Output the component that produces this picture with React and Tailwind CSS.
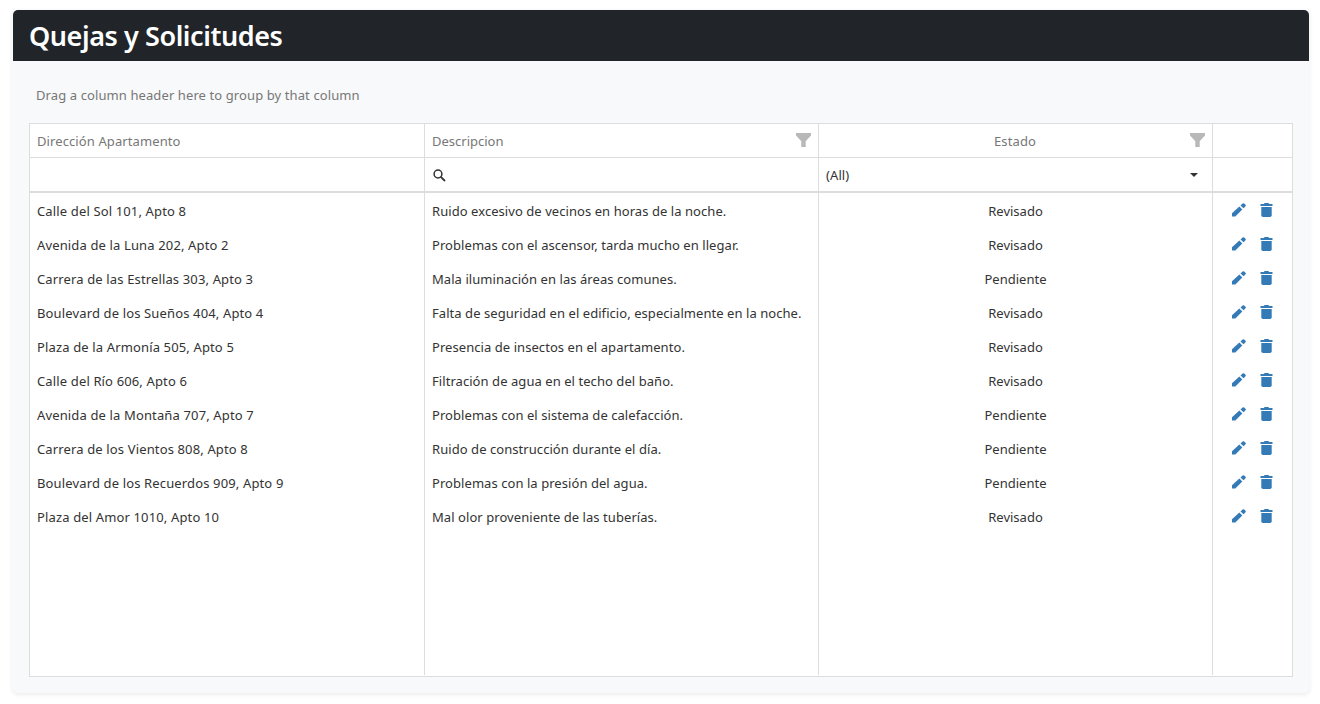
const rows = [
  ["Calle del Sol 101, Apto 8", "Ruido excesivo de vecinos en horas de la noche.", "Revisado"],
  ["Avenida de la Luna 202, Apto 2", "Problemas con el ascensor, tarda mucho en llegar.", "Revisado"],
  ["Carrera de las Estrellas 303, Apto 3", "Mala iluminación en las áreas comunes.", "Pendiente"],
  ["Boulevard de los Sueños 404, Apto 4", "Falta de seguridad en el edificio, especialmente en la noche.", "Revisado"],
  ["Plaza de la Armonía 505, Apto 5", "Presencia de insectos en el apartamento.", "Revisado"],
  ["Calle del Río 606, Apto 6", "Filtración de agua en el techo del baño.", "Revisado"],
  ["Avenida de la Montaña 707, Apto 7", "Problemas con el sistema de calefacción.", "Pendiente"],
  ["Carrera de los Vientos 808, Apto 8", "Ruido de construcción durante el día.", "Pendiente"],
  ["Boulevard de los Recuerdos 909, Apto 9", "Problemas con la presión del agua.", "Pendiente"],
  ["Plaza del Amor 1010, Apto 10", "Mal olor proveniente de las tuberías.", "Revisado"],
];

const columns = "grid grid-cols-[395px_394px_394px_79px]";

function Funnel() {
  return (
    <svg className="-mt-0.5 h-[14px] w-[15px] shrink-0" viewBox="0 0 15 14" fill="#b8b8b8">
      <path d="M0 0h15v2.500L9.700 8.200V14H5.300V8.200L0 2.500z" />
    </svg>
  );
}

function SearchIcon() {
  return (
    <svg className="mt-0.5 size-[13px]" viewBox="0 0 13 13" fill="none" stroke="#333" strokeWidth="1.5">
      <circle cx="5" cy="5" r="3.900" />
      <path d="M7.800 7.800l4.200 4.200" strokeWidth="1.800" />
    </svg>
  );
}

function Pencil() {
  return (
    <svg className="size-[14px]" viewBox="0 0 14 14" fill="#337ab7">
      <path d="M0 13.500v-3.200l7.300-6.700 3 2.900L3.300 13.500z" />
      <path d="M8.500 2.400L10.600.500q.8-.7 1.600 0l1.300 1.200q.7.800 0 1.600L11.600 5.300z" />
    </svg>
  );
}

function Trash() {
  return (
    <svg className="h-[14px] w-[13px]" viewBox="0 0 13 14" fill="#337ab7">
      <path d="M.500 1h3.200l1-1h3.600l1 1h3.200v2H.500z" />
      <path d="M1.300 4h10.400v8.300q0 1.700-1.700 1.700H3q-1.700 0-1.700-1.700z" />
    </svg>
  );
}

export default function App() {
  return (
    <div className="h-[704px] bg-white px-3 pt-[9px] font-['Noto_Sans',sans-serif] text-[13px] tracking-[0.1px] text-[#333]">
      <section className="flex h-[684px] w-[1298px] flex-col rounded-md border border-[#f8f9fa] bg-[#f8f9fa] shadow-[0_2px_4px_rgba(0,0,0,0.075)]">
        <header className="flex h-[51px] shrink-0 items-center rounded-t-[5px] bg-[#212529] px-4">
          <h1 className="text-[27px] leading-none font-semibold tracking-[-0.43px] text-white"><span>Quejas y Solicitudes</span></h1>
        </header>
        <div className="flex h-[62px] shrink-0 items-center px-[23px] pt-2 text-[#777]">
          <span>Drag a column header here to group by that column</span>
        </div>
        <div className="mx-4 flex h-[554px] w-[1264px] flex-col border border-[#ddd] bg-white">
          <div className={`${columns} h-[34px] shrink-0 border-b border-[#ddd] text-[#777]`}>
            <div className="flex items-center border-r border-[#ddd] pt-0.5 pl-[7px]"><span>Dirección Apartamento</span></div>
            <div className="flex items-center justify-between border-r border-[#ddd] pr-[7px] pl-[7px]"><span className="pt-0.5 tracking-normal">Descripcion</span><Funnel /></div>
            <div className="flex items-center border-r border-[#ddd] pr-[7px]"><span className="flex-1 pt-0.5 pl-[21px] text-center">Estado</span><Funnel /></div>
            <div />
          </div>
          <div className={`${columns} h-[35px] shrink-0 border-b-2 border-[#ddd]`}>
            <div className="border-r border-[#ddd]" />
            <div className="flex items-center border-r border-[#ddd] pl-2"><SearchIcon /></div>
            <div className="flex items-center justify-between border-r border-[#ddd] pr-[14px] pl-[7px]">
              <span className="pt-0.5">(All)</span>
              <svg className="h-1 w-[8px]" viewBox="0 0 8 4" fill="#333"><path d="M0 0h8L4 4z" /></svg>
            </div>
            <div />
          </div>
          <div className={`${columns} h-[482px] shrink-0`}>
            <div className="border-r border-[#ddd] pt-0.5 tracking-[0.14px]">
              {rows.map((r) => <div key={r[0]} className="flex h-[34px] items-center pl-[7px]"><span>{r[0]}</span></div>)}
            </div>
            <div className="border-r border-[#ddd] pt-0.5 tracking-[0.06px]">
              {rows.map((r) => <div key={r[1]} className="flex h-[34px] items-center pl-[7px]"><span>{r[1]}</span></div>)}
            </div>
            <div className="border-r border-[#ddd] pt-0.5 tracking-normal">
              {rows.map((r) => <div key={r[0]} className="flex h-[34px] items-center justify-center"><span>{r[2]}</span></div>)}
            </div>
            <div className="pt-px">
              {rows.map((r) => <div key={r[0]} className="flex h-[34px] items-center gap-[14px] pb-0.5 pl-[19px]"><Pencil /><Trash /></div>)}
            </div>
          </div>
        </div>
      </section>
    </div>
  );
}
